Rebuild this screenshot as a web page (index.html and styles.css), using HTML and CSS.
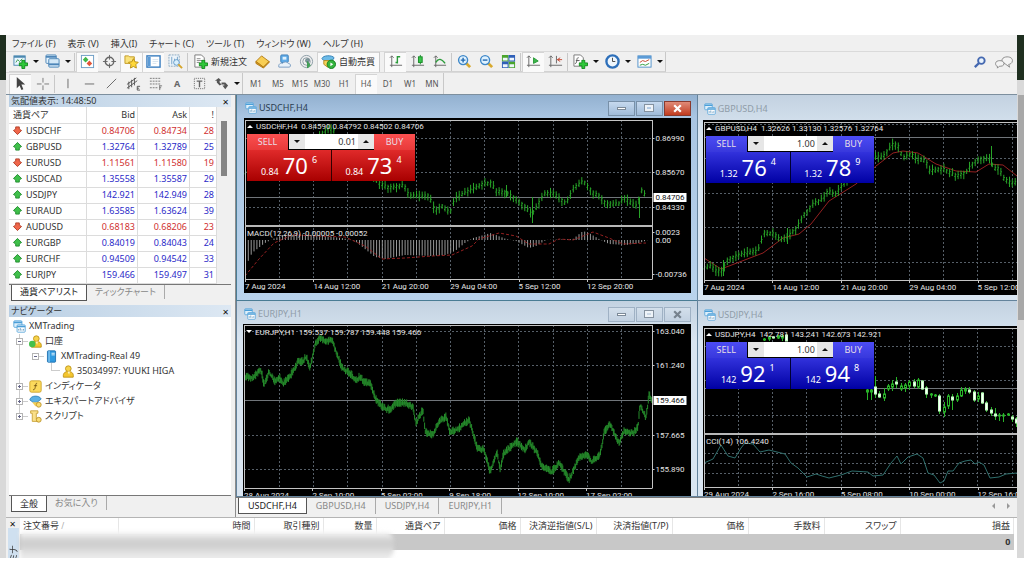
FILE: index.html
```html
<!DOCTYPE html>
<html lang="ja">

<head>
  <meta charset="UTF-8">
  <title>XMTrading</title>
  <link rel="stylesheet" href="styles.css">
</head>

<body>

  <!-- shared icons -->
  <svg class="sprite" aria-hidden="true">
    <symbol id="i-win" viewBox="0 0 16 16">
      <rect x="1" y="1" width="10" height="8" rx="1" fill="#dff0fb" stroke="#4b9fd8"/>
      <path d="M1 3h10" stroke="#4b9fd8" stroke-width="2"/>
      <rect x="5" y="6" width="10" height="9" rx="1" fill="#fff" stroke="#4b9fd8"/>
      <path d="M5 8h10" stroke="#4b9fd8" stroke-width="2"/>
      <path d="M7 13v-2M9 13v-3M11 13v-1.500M13 13v-2" stroke="#5a90b8" fill="none"/>
    </symbol>
    <symbol id="i-up" viewBox="0 0 10 10">
      <path d="M5 .5L9.500 5 7 6.500V9H3V6.500L.5 5z" fill="#3fc04a" stroke="#1d8a2b"/>
    </symbol>
    <symbol id="i-down" viewBox="0 0 10 10">
      <path d="M5 9.500L9.500 5 7 3.500V1H3v2.500L.5 5z" fill="#f0664a" stroke="#b03a22"/>
    </symbol>
    <symbol id="i-person" viewBox="0 0 16 16">
      <circle cx="9" cy="4.500" r="3.500" fill="#f6d34c" stroke="#b98d10"/>
      <path d="M3 15c-1-5 2-7 6-7s7 2 6 7z" fill="#f3c52f" stroke="#b98d10"/>
      <path d="M8 8l2 4 1-4" fill="#fff4c0"/>
    </symbol>
    <symbol id="i-plus" viewBox="0 0 10 10">
      <path d="M3.500.5h3v3h3v3h-3v3h-3v-3h-3v-3h3z" fill="#2fc83a" stroke="#128a1c"/>
    </symbol>
  </svg>

  <div class="desktop">
    <div class="edge edge-left"></div>

    <div class="app">
      <nav class="menubar">
        <button>ファイル (F)</button>
        <button>表示 (V)</button>
        <button>挿入(I)</button>
        <button>チャート (C)</button>
        <button>ツール (T)</button>
        <button>ウィンドウ (W)</button>
        <button>ヘルプ (H)</button>
      </nav>

      <div class="toolbar">
        <div class="tool-group bordered">
          <button class="tool" aria-label="新規チャート"><svg viewBox="0 0 16 16"><rect x="1" y="2" width="12" height="10" fill="#eaf6ff" stroke="#4b88b0"/><path d="M1 3h12" stroke="#4b88b0" stroke-width="2"/><path d="M3 9l2-3 2 2 3-3" stroke="#3c9b50" fill="none"/><use href="#i-plus" x="6" y="6" width="10" height="10"/></svg></button>
          <button class="drop" aria-label="チャート一覧"></button>
          <button class="tool" aria-label="プロファイル"><svg viewBox="0 0 16 16"><rect x="1" y="1" width="11" height="9" rx="1" fill="#e5f3fd" stroke="#4d86b8"/><path d="M1 3h11" stroke="#4d86b8" stroke-width="2"/><rect x="4" y="5" width="11" height="9" rx="1" fill="#d3e8f7" stroke="#4d86b8"/><path d="M4 11h11" stroke="#4d86b8" stroke-width="2"/></svg></button>
          <button class="drop" aria-label="プロファイル一覧"></button>
          <span class="sep"></span>
          <button class="tool on" aria-label="気配値表示"><svg viewBox="0 0 16 16"><rect x="1.500" y="1.500" width="13" height="13" fill="#fff" stroke="#6b9cc4"/><path d="M3 6l3-3 3 3-3 3z" fill="#42b84a"/><path d="M7 10l3-3 3 3-3 3z" fill="#e25638"/></svg></button>
          <button class="tool" aria-label="データウィンドウ"><svg viewBox="0 0 16 16" fill="none" stroke="#666"><circle cx="8" cy="8" r="4.500" stroke-width="1.500"/><path d="M8 1v5M8 10v5M1 8h5M10 8h5"/></svg></button>
          <button class="tool on" aria-label="ナビゲーター"><svg viewBox="0 0 16 16"><path d="M1 2h4l1 1h5v7H1z" fill="#fae37c" stroke="#c39a24"/><path d="M10 5l1.600 3.300 3.600.5-2.600 2.600.6 3.600-3.200-1.700L6.800 15l.6-3.600L4.800 8.800l3.600-.5z" fill="#ffd83a" stroke="#b98f12"/></svg></button>
          <button class="tool on" aria-label="ターミナル"><svg viewBox="0 0 16 16"><rect x="1" y="2" width="14" height="12" fill="#fff" stroke="#3c7fc0" stroke-width="1.500"/><path d="M2 3h3v10H2z" fill="#5c9bd6"/><path d="M7 6h6M7 8h6M7 10h4" stroke="#d4e2ee"/></svg></button>
          <button class="tool" aria-label="ストラテジーテスター"><svg viewBox="0 0 16 16" fill="none"><rect x="1" y="1" width="11" height="12" fill="#edf4fa" stroke="#8aa8c0" stroke-dasharray="2 1"/><path d="M4 3v8M7 5v6M10 3v5" stroke="#72a2c8"/><circle cx="9" cy="9" r="3" fill="#d9effc" stroke="#5f99c8"/><path d="M11 11l4 4" stroke="#d6a52a" stroke-width="2"/></svg></button>
          <span class="sep"></span>
          <button class="tool wide"><svg viewBox="0 0 16 16"><path d="M2 1h7l3 3v10H2z" fill="#fff" stroke="#777"/><path d="M4 5h4M4 7h6M4 9h3" stroke="#888"/><use href="#i-plus" x="6" y="6" width="10" height="10"/></svg>新規注文</button>
          <button class="tool" aria-label="メタエディター"><svg viewBox="0 0 16 16"><path d="M1 8l6-6 8 6-6 6z" fill="#f8ce54" stroke="#b37d15"/><path d="M1 8v2l8 5 6-6V8l-6 6z" fill="#d99a25" stroke="#b37d15"/></svg></button>
          <button class="tool" aria-label="VPS"><svg viewBox="0 0 16 16"><rect x="4" y="1" width="8" height="8" rx="1" fill="#5fabe8" stroke="#3d7fba"/><path d="M6 3h4v3H6z" fill="#dff1fd"/><path d="M2 14c-1-3 2-5 4-4 1-2 5-2 6 0 3 0 3 4 1 4z" fill="#e9f2fa" stroke="#7a9cc0"/></svg></button>
          <button class="tool" aria-label="シグナル"><svg viewBox="0 0 16 16" fill="none" stroke="#8a9aa4"><circle cx="8" cy="8" r="6.500"/><circle cx="8" cy="8" r="4"/><circle cx="9" cy="7" r="2" fill="#7f9aa0" stroke="#6d8488"/><path d="M9 8l3 4-3 3z" fill="#3fa552" stroke="#3b9650"/></svg></button>
          <button class="tool wide on"><svg viewBox="0 0 16 16"><path d="M1 5c1-4 11-4 13-1l-2 3H3z" fill="#6dbbe8" stroke="#2f7fb4"/><path d="M3 7h8v4l-4 3-4-3z" fill="#f7d25a" stroke="#b98d20"/><circle cx="11" cy="11" r="4.500" fill="#35b53f" stroke="#16801f"/><path d="M10 9l3 2-3 2z" fill="#fff"/></svg>自動売買</button>
        </div>
        <div class="tool-group bordered">
          <button class="tool on" aria-label="バーチャート"><svg viewBox="0 0 16 16" fill="none" stroke="#666"><path d="M4 2v12M2 12h13M2 4l2-2 2 2"/><path d="M10 2v8M10 3h3M8 9h2" stroke="#2b9b3a" stroke-width="1.500"/></svg></button>
          <button class="tool" aria-label="ローソク足"><svg viewBox="0 0 16 16" fill="none" stroke="#666"><path d="M4 2v12M2 12h13M2 4l2-2 2 2"/><path d="M11 1v10" stroke="#168a26"/><rect x="9" y="3" width="4" height="6" fill="#39c54a" stroke="#168a26"/></svg></button>
          <button class="tool" aria-label="ラインチャート"><svg viewBox="0 0 16 16" fill="none" stroke="#666"><path d="M4 2v12M2 12h13M2 4l2-2 2 2"/><path d="M4 9c3-5 6-4 10 1" stroke="#2b9b3a" stroke-width="1.500"/></svg></button>
          <span class="sep"></span>
          <button class="tool" aria-label="ズームイン"><svg viewBox="0 0 16 16" fill="none"><path d="M9 9l5 5" stroke="#d8a92e" stroke-width="3"/><circle cx="6.500" cy="6.500" r="4.800" fill="#dff2ff" stroke="#3e87c8" stroke-width="1.500"/><path d="M4 6.500h5M6.500 4v5" stroke="#2369b0" stroke-width="1.500"/></svg></button>
          <button class="tool" aria-label="ズームアウト"><svg viewBox="0 0 16 16" fill="none"><path d="M9 9l5 5" stroke="#d8a92e" stroke-width="3"/><circle cx="6.500" cy="6.500" r="4.800" fill="#dff2ff" stroke="#3e87c8" stroke-width="1.500"/><path d="M4 6.500h5" stroke="#2369b0" stroke-width="1.500"/></svg></button>
          <button class="tool" aria-label="ウィンドウの整列"><svg viewBox="0 0 16 16"><path d="M1 1h7v7H1zM8 8h7v7H8z" fill="#4aa52c"/><path d="M8 1h7v7H8zM1 8h7v7H1z" fill="#2f5fb8"/><path d="M2 4h5v3H2zM9 4h5v3H9zM2 11h5v3H2zM9 11h5v3H9z" fill="#edf5fb"/></svg></button>
          <span class="sep"></span>
          <button class="tool on" aria-label="自動スクロール"><svg viewBox="0 0 16 16" fill="none" stroke="#666"><path d="M3 2v12M1 12h14M1 4l2-2 2 2"/><path d="M8 4l5 3.500L8 10z" fill="#3cb54a" stroke="#2b9b3a"/></svg></button>
          <button class="tool" aria-label="チャートシフト"><svg viewBox="0 0 16 16" fill="none" stroke="#666"><path d="M3 2v12M1 12h14M1 4l2-2 2 2M9 2v8"/><path d="M15 6h-5M13 4l-3 2 3 2" stroke="#c3452f"/></svg></button>
          <span class="sep"></span>
          <button class="tool" aria-label="インディケータ"><svg viewBox="0 0 16 16"><path d="M1 1h7l3 3v9H1z" fill="#fff" stroke="#777"/><path d="M6 4c-3-1-1 7-4 6M3 7h4" stroke="#555" fill="none"/><use href="#i-plus" x="6" y="6" width="10" height="10"/></svg></button>
          <button class="drop" aria-label="インディケータ一覧"></button>
          <button class="tool" aria-label="時間足"><svg viewBox="0 0 16 16"><circle cx="8" cy="8" r="6.500" fill="#eef6fd" stroke="#2d6fba" stroke-width="2.500"/><path d="M8 4v4h3" stroke="#444" fill="none"/></svg></button>
          <button class="drop" aria-label="時間足一覧"></button>
          <button class="tool" aria-label="定型チャート"><svg viewBox="0 0 16 16" fill="none"><rect x="1" y="2" width="14" height="12" fill="#fff" stroke="#4d8fc8"/><path d="M1 3.500h14" stroke="#5c9bd6" stroke-width="3"/><path d="M3 9l3-2 3 1 4-2" stroke="#c3452f"/><path d="M3 12l3-1 3 1 4-2" stroke="#2b9b3a"/></svg></button>
          <button class="drop" aria-label="定型チャート一覧"></button>
        </div>
        <div class="tool-right">
          <button class="tool" aria-label="検索"><svg viewBox="0 0 16 16" fill="none"><circle cx="10" cy="6" r="3.500" fill="#e9f3fd" stroke="#4468b0" stroke-width="2"/><path d="M7.500 8.500L3 13" stroke="#4468b0" stroke-width="2.500"/></svg></button>
          <button class="tool chat" aria-label="チャット"><svg viewBox="0 0 20 16" fill="#f4f4f4" stroke="#888"><path d="M8 7c-2-6 11-7 11-1 0 3-3 4-4 4l1 3-4-3z"/><path d="M1 9c0-4 9-4 9 0 0 3-3 3-5 3l-2 2v-2c-1 0-2-1-2-3z"/></svg></button>
        </div>
      </div>

      <div class="toolbar toolbar-second">
        <div class="tool-group">
          <button class="tool on" aria-label="カーソル"><svg viewBox="0 0 16 16"><path d="M4 1v12l3-3 2 5 2-1-2-5h4z" fill="#444"/></svg></button>
          <button class="tool" aria-label="クロスヘア"><svg viewBox="0 0 16 16" stroke="#777"><path d="M8.500 2v5M8.500 10v5M2 8.500h5M10 8.500h5"/></svg></button>
          <span class="sep"></span>
          <button class="tool" aria-label="垂直線"><svg viewBox="0 0 16 16" stroke="#666"><path d="M8.500 3v10"/></svg></button>
          <button class="tool" aria-label="水平線"><svg viewBox="0 0 16 16" stroke="#666"><path d="M3 8.500h10"/></svg></button>
          <button class="tool" aria-label="トレンドライン"><svg viewBox="0 0 16 16" stroke="#666"><path d="M3 13L13 3"/></svg></button>
          <button class="tool" aria-label="チャネル"><svg viewBox="0 0 16 16" stroke="#555" fill="none"><path d="M1 9l10-7M1 13l11-8M3 6v8M6 4v8M9 2v8M12 11h3M12 13h2M12 15h3M12 11v4"/></svg></button>
          <button class="tool" aria-label="フィボナッチ"><svg viewBox="0 0 16 16" stroke="#777" fill="none"><path d="M2 2.500h12M2 5.500h12M2 8.500h12M2 12.500h8" stroke-dasharray="2 1"/><path d="M12.500 10v5M12 10.500h3M12 12.500h2"/></svg></button>
          <button class="tool letter">A</button>
          <button class="tool" aria-label="テキストラベル"><svg viewBox="0 0 16 16" stroke="#666" fill="none"><rect x="2.500" y="2.500" width="11" height="11" stroke-dasharray="1 1"/><path d="M5 5.500h6M8 5v7" stroke-width="1.500"/></svg></button>
          <button class="tool" aria-label="矢印"><svg viewBox="0 0 16 16" fill="#555"><path d="M5 2l3 3H6v2l2 2-2 1-3-3V5H1zM12 7l3 3-3 4-3-4h2V9H8V7z"/></svg></button>
          <button class="drop" aria-label="矢印一覧"></button>
        </div>
        <div class="tool-group periods">
          <button>M1</button>
          <button>M5</button>
          <button>M15</button>
          <button>M30</button>
          <button>H1</button>
          <button class="on">H4</button>
          <button>D1</button>
          <button>W1</button>
          <button>MN</button>
        </div>
      </div>

      <div class="main">
        <aside class="side">
          <section class="panel">
            <header class="panel-title">気配値表示: 14:48:50<button class="close" aria-label="閉じる"></button></header>
            <div class="market">
              <table class="quotes">
                <colgroup><col><col class="c-bid"><col class="c-ask"><col class="c-spread"></colgroup>
                <thead>
                  <tr><th>通貨ペア</th><th>Bid</th><th>Ask</th><th>!</th></tr>
                </thead>
                <tbody>
                  <tr class="down"><td><svg><use href="#i-down"/></svg>USDCHF</td><td>0.84706</td><td>0.84734</td><td>28</td></tr>
                  <tr class="up"><td><svg><use href="#i-up"/></svg>GBPUSD</td><td>1.32764</td><td>1.32789</td><td>25</td></tr>
                  <tr class="down"><td><svg><use href="#i-down"/></svg>EURUSD</td><td>1.11561</td><td>1.11580</td><td>19</td></tr>
                  <tr class="up"><td><svg><use href="#i-up"/></svg>USDCAD</td><td>1.35558</td><td>1.35587</td><td>29</td></tr>
                  <tr class="up"><td><svg><use href="#i-up"/></svg>USDJPY</td><td>142.921</td><td>142.949</td><td>28</td></tr>
                  <tr class="up"><td><svg><use href="#i-up"/></svg>EURAUD</td><td>1.63585</td><td>1.63624</td><td>39</td></tr>
                  <tr class="down"><td><svg><use href="#i-down"/></svg>AUDUSD</td><td>0.68183</td><td>0.68206</td><td>23</td></tr>
                  <tr class="up"><td><svg><use href="#i-up"/></svg>EURGBP</td><td>0.84019</td><td>0.84043</td><td>24</td></tr>
                  <tr class="up"><td><svg><use href="#i-up"/></svg>EURCHF</td><td>0.94509</td><td>0.94542</td><td>33</td></tr>
                  <tr class="up"><td><svg><use href="#i-up"/></svg>EURJPY</td><td>159.466</td><td>159.497</td><td>31</td></tr>
                </tbody>
              </table>
              <div class="scroll"><div class="thumb"></div></div>
            </div>
            <div class="tabs">
              <button class="tab active">通貨ペアリスト</button>
              <button class="tab">ティックチャート</button>
            </div>
          </section>

          <section class="panel navigator">
            <header class="panel-title">ナビゲーター<button class="close" aria-label="閉じる"></button></header>
            <ul class="tree">
              <li><svg viewBox="0 0 16 16"><use href="#i-win"/></svg>XMTrading</li>
              <li class="l1"><i class="box minus"></i><svg viewBox="0 0 16 16"><use href="#i-person"/><circle cx="4" cy="11" r="4" fill="#45c04c"/></svg>口座</li>
              <li class="l2"><i class="box minus"></i><svg viewBox="0 0 16 16"><rect x="3" y="1" width="10" height="14" rx="1" fill="#2f9ae0" stroke="#1768a8"/><path d="M5 1v14" stroke="#bfe2fa"/><path d="M8 4h4M8 6h4" stroke="#fff"/></svg>XMTrading-Real 49</li>
              <li class="l3"><i class="elbow"></i><svg viewBox="0 0 16 16"><use href="#i-person"/></svg>35034997: YUUKI HIGA</li>
              <li class="l1"><i class="box plus"></i><svg viewBox="0 0 16 16"><rect x="1" y="1" width="14" height="14" rx="2" fill="#fbd95c" stroke="#c99e22"/><path d="M10 4c-3-1-1 9-5 8M6 7h4" stroke="#6b4b10" fill="none"/></svg>インディケータ</li>
              <li class="l1"><i class="box plus"></i><svg viewBox="0 0 16 16"><path d="M1 6c1-6 12-6 14-1l-5 4H5z" fill="#5cb1e4" stroke="#2f7fb4"/><path d="M4 9h7l-3 5z" fill="#f5cf56"/><circle cx="12" cy="12" r="3" fill="#f8dc72" stroke="#b98d20"/></svg>エキスパートアドバイザ</li>
              <li class="l1"><i class="box plus"></i><svg viewBox="0 0 16 16"><path d="M2 1h9v3H9v7h3v3H4V4H2z" fill="#fae08a" stroke="#c39a2c"/><circle cx="12" cy="12" r="3" fill="#f8dc72" stroke="#b98d20"/></svg>スクリプト</li>
            </ul>
            <div class="tabs">
              <button class="tab active">全般</button>
              <button class="tab">お気に入り</button>
            </div>
          </section>
        </aside>

        <div class="workspace">
          <div class="mdi">
            <section class="win active">
              <header class="win-title"><svg><use href="#i-win"/></svg>USDCHF,H4
                <div class="win-buttons"><button aria-label="最小化"><i class="g-min"></i></button><button aria-label="最大化"><i class="g-max"></i></button><button class="x" aria-label="閉じる"><svg viewBox="0 0 10 10"><path d="M2 2l6 6M8 2l-6 6"/></svg></button></div>
              </header>
              <div class="chart" data-chart="usdchf">
                <div class="trade red">
                  <button class="side-btn">SELL</button>
                  <div class="lot"><button class="dec" aria-label="減らす"></button><input type="text" value="0.01" aria-label="USDCHF ロット"><button class="inc" aria-label="増やす"></button></div>
                  <button class="side-btn">BUY</button>
                  <div class="price"><span>0.84</span><b>70</b><sup>6</sup></div>
                  <div class="price"><span>0.84</span><b>73</b><sup>4</sup></div>
                </div>
              </div>
            </section>

            <section class="win tall">
              <header class="win-title"><svg><use href="#i-win"/></svg>GBPUSD,H4</header>
              <div class="chart" data-chart="gbpusd">
                <div class="trade blue">
                  <button class="side-btn">SELL</button>
                  <div class="lot"><button class="dec" aria-label="減らす"></button><input type="text" value="1.00" aria-label="GBPUSD ロット"><button class="inc" aria-label="増やす"></button></div>
                  <button class="side-btn">BUY</button>
                  <div class="price"><span>1.32</span><b>76</b><sup>4</sup></div>
                  <div class="price"><span>1.32</span><b>78</b><sup>9</sup></div>
                </div>
              </div>
            </section>

            <section class="win">
              <header class="win-title"><svg><use href="#i-win"/></svg>EURJPY,H1
                <div class="win-buttons"><button aria-label="最小化"><i class="g-min"></i></button><button aria-label="最大化"><i class="g-max"></i></button><button aria-label="閉じる"><svg viewBox="0 0 10 10"><path d="M2 2l6 6M8 2l-6 6"/></svg></button></div>
              </header>
              <div class="chart" data-chart="eurjpy"></div>
            </section>

            <section class="win tall">
              <header class="win-title"><svg><use href="#i-win"/></svg>USDJPY,H4</header>
              <div class="chart" data-chart="usdjpy">
                <div class="trade blue">
                  <button class="side-btn">SELL</button>
                  <div class="lot"><button class="dec" aria-label="減らす"></button><input type="text" value="1.00" aria-label="USDJPY ロット"><button class="inc" aria-label="増やす"></button></div>
                  <button class="side-btn">BUY</button>
                  <div class="price"><span>142</span><b>92</b><sup>1</sup></div>
                  <div class="price"><span>142</span><b>94</b><sup>8</sup></div>
                </div>
              </div>
            </section>
          </div>
          <div class="tabs chart-tabs">
            <button class="tab active">USDCHF,H4</button>
            <button class="tab">GBPUSD,H4</button>
            <button class="tab">USDJPY,H4</button>
            <button class="tab">EURJPY,H1</button>
            <span class="tab-arrows"><button class="left" aria-label="前のタブ"></button><button class="right" aria-label="次のタブ"></button></span>
          </div>
        </div>
      </div>

      <section class="terminal">
        <div class="terminal-side">
          <button class="close" aria-label="閉じる"></button>
          <div class="terminal-name"><span>ターミナル</span></div>
        </div>
        <table class="orders">
          <colgroup><col class="o-id"><col class="o-time"><col class="o-type"><col class="o-size"><col class="o-pair"><col class="o-std"><col class="o-std"><col class="o-std"><col class="o-std"><col class="o-std"><col class="o-std"><col></colgroup>
          <thead>
            <tr><th>注文番号 <small>/</small></th><th>時間</th><th>取引種別</th><th>数量</th><th>通貨ペア</th><th>価格</th><th>決済逆指値(S/L)</th><th>決済指値(T/P)</th><th>価格</th><th>手数料</th><th>スワップ</th><th>損益</th></tr>
          </thead>
          <tbody>
            <tr><td colspan="11"></td><td>0</td></tr>
          </tbody>
        </table>
        <div class="smudge"></div>
      </section>
    </div>

    <div class="edge edge-right"><div class="edge-thumb"></div></div>
  </div>

  <script src="charts.js"></script>
</body>

</html>
```
FILE: styles.css
```css
* {
  box-sizing: border-box;
}

body {
  margin: 0;
  padding: 35px 0 18px;
  background-color: #fff;
  color: #333;
  font-family: "Noto Sans", "Noto Sans CJK JP", sans-serif;
  font-size: 9px;
  line-height: 12px;
  font-feature-settings: "palt";
  overflow: hidden;
}

button,
input {
  margin: 0;
  padding: 0;
  border: 0;
  background: none;
  color: inherit;
  font: inherit;
  font-feature-settings: inherit;
}

table {
  border-collapse: collapse;
  table-layout: fixed;
  width: 100%;
}

.sprite {
  display: none;
}

.desktop {
  display: flex;
}

.edge {
  background: linear-gradient(#1f2f20 0 45px, #d9d9d9 45px);
  width: 6px;
}

.edge-right {
  width: 7px;
  padding: 60px 0 0 1px;
}

.edge-thumb {
  height: 225px;
  background-color: #a8a8a8;
}

.app {
  flex: 1;
  min-width: 0;
  background-color: #f0f0f0;
}

/* menu and toolbars */
.menubar {
  display: flex;
  gap: 12px;
  height: 16px;
  padding: 2px 6px 0;
}

.toolbar {
  display: flex;
  height: 21px;
  padding-left: 3px;
  border-top: 1px solid #dadada;
}

.toolbar-second {
  height: 23px;
  border-bottom: 1px solid #7d8f9e;
}

.tool-group {
  display: flex;
  align-items: center;
  border-right: 1px solid #c8c8c8;
  margin-right: 2px;
}

.tool-group.bordered {
  border-bottom: 1px solid #d2d2d2;
  margin-right: 4px;
}

.tool {
  display: flex;
  align-items: center;
  justify-content: center;
  width: 22px;
  height: 20px;
}

.tool svg {
  width: 15px;
  height: 15px;
}

.tool.chat svg {
  width: 20px;
}

.tool.wide {
  width: 62px;
  gap: 3px;
}

.tool.on,
.periods .on {
  background-color: #fafafa;
  box-shadow: inset 1px 1px 0 #d4d4d4;
}

.tool.letter {
  font-weight: bold;
  color: #666;
}

.drop {
  width: 10px;
  height: 20px;
}

.drop::before,
.dec::before,
.inc::before {
  content: "";
  display: block;
  width: 0;
  margin: 0 auto;
  border: solid transparent;
  border-width: 3px 3px 0;
  border-top-color: #111;
}

.sep {
  width: 1px;
  height: 18px;
  margin: 0 1px;
  background-color: #c8c8c8;
}

.tool-right {
  display: flex;
  gap: 3px;
  margin-left: auto;
  padding-right: 2px;
}

.periods button {
  width: 22px;
  height: 20px;
  color: #555;
  font-size: 8px;
}

/* left side */
.main {
  display: flex;
}

.side {
  display: flex;
  flex-direction: column;
  gap: 3px;
  width: 230px;
  padding: 0 4px 4px 3px;
  border-right: 1px solid #8c8c8c;
}

.panel-title {
  display: flex;
  justify-content: space-between;
  align-items: center;
  height: 12px;
  padding: 0 2px;
  background: linear-gradient(90deg, #b9cfe4, #dde8f3);
}

.close {
  position: relative;
  width: 7px;
  height: 10px;
}

.close::before {
  content: "✕";
  font: bold 8px/10px "DejaVu Sans", sans-serif;
  color: #111;
}

.market {
  display: flex;
  background-color: #fff;
  border-bottom: 1px solid #777;
}

.quotes {
  flex: 1;
}

.c-bid {
  width: 51px;
}

.c-ask {
  width: 52px;
}

.c-spread {
  width: 27px;
}

.quotes th,
.quotes td {
  height: 16px;
  padding: 0 2px;
  border: 1px solid #dcdcdc;
  border-top: 0;
  border-left: 0;
  font-weight: normal;
  text-align: right;
}

.quotes th:first-child,
.quotes td:first-child {
  padding-left: 4px;
  color: #333;
  text-align: left;
}

.quotes svg {
  width: 9px;
  height: 9px;
  margin-right: 4px;
  vertical-align: -1px;
}

.quotes .down {
  color: #d03030;
}

.quotes .up {
  color: #2a2ac8;
}

.scroll {
  width: 14px;
  padding: 14px 4px 0;
  background-color: #f0f0f0;
}

.thumb {
  height: 55px;
  background-color: #858585;
}

.tabs {
  display: flex;
  align-items: flex-start;
  height: 17px;
  padding-left: 2px;
}

.tab {
  height: 14px;
  padding: 0 8px;
  border-right: 1px solid #aaa;
  color: #888;
}

.tab.active {
  height: 16px;
  background-color: #fff;
  border: 1px solid #555;
  border-top: 0;
  color: #222;
}

.navigator {
  display: flex;
  flex-direction: column;
  flex: 1;
}

.tree {
  position: relative;
  flex: 1;
  margin: 0;
  padding: 2px 0 0 4px;
  list-style: none;
  background-color: #fff;
  border-bottom: 1px solid #777;
}

/* trunk line between the first and last expander */
.tree::before {
  content: "";
  position: absolute;
  top: 17px;
  left: 10px;
  height: 82px;
  border-left: 1px solid #ccc;
}

.tree li {
  display: flex;
  align-items: center;
  height: 15px;
}

.tree svg {
  width: 13px;
  height: 13px;
  margin-right: 3px;
}

.tree .l1 {
  padding-left: 3px;
}

.tree .l2 {
  padding-left: 19px;
}

.tree .l3 {
  padding-left: 38px;
}

.box {
  position: relative;
  width: 7px;
  height: 7px;
  margin-right: 6px;
  border: 1px solid #b4b4b4;
  background: linear-gradient(#668, #668) center / 3px 1px no-repeat #fff;
}

.box::after {
  content: "";
  position: absolute;
  top: 2px;
  left: 6px;
  width: 5px;
  border-top: 1px solid #ccc;
}

.box.plus {
  background: linear-gradient(#668, #668) center / 3px 1px no-repeat, linear-gradient(#668, #668) center / 1px 3px no-repeat #fff;
}

.elbow {
  width: 9px;
  height: 8px;
  margin: -8px 1px 0 0;
  border: solid #ccc;
  border-width: 0 0 1px 1px;
}

/* chart windows */
.workspace {
  flex: 1;
  min-width: 0;
}

.mdi {
  display: grid;
  grid-template-columns: 59% 1fr;
  grid-template-rows: 206px 196px;
  border-bottom: 1px solid #777;
  overflow: hidden;
}

.win {
  min-width: 0;
  padding: 0 6px 0;
  overflow: hidden;
  background: linear-gradient(#c3d2e1, #d9e5f1 40px);
  border: solid #64839c;
  border-width: 0 0 1px 1px;
}

.win.active {
  padding-left: 7px;
  background: linear-gradient(#93b1d0, #a9c5e2 22px, #b9d3ec);
  border-color: #4a7c94;
}

.win.tall {
  padding: 0 0 0 5px;
}

.win-title {
  display: flex;
  align-items: center;
  height: 23px;
  padding: 3px 0 0 1px;
  color: #8f9ca8;
}

.win.tall .win-title {
  height: 25px;
}

.win.active .win-title {
  color: #2b3d50;
}

.win-title > svg {
  width: 12px;
  height: 12px;
  margin-right: 2px;
}

.win-buttons {
  display: flex;
  gap: 1px;
  margin-left: auto;
}

.win-buttons button {
  display: flex;
  align-items: center;
  justify-content: center;
  width: 27px;
  height: 15px;
  border: 1px solid #9fb1c4;
  background: linear-gradient(#d3dfeb, #c2d1e1);
}

.active .win-buttons button {
  border-color: #7890a8;
  background: linear-gradient(#c6d9ee, #9fbbd9);
}

.active .win-buttons .x {
  border-color: #8a3a2e;
  background: linear-gradient(#e08b78, #c23c20);
}

.g-min {
  width: 9px;
  height: 3px;
  background-color: #fff;
  border: 1px solid #7c8a98;
}

.g-max {
  width: 8px;
  height: 6px;
  border: 2px solid #eef3f8;
  outline: 1px solid #8592a0;
}

.win-buttons svg {
  width: 11px;
  height: 11px;
  stroke: #76828e;
  stroke-width: 2;
}

.win-buttons .x svg {
  stroke: #fff;
}

.chart {
  position: relative;
  height: 175px;
  background-color: #000;
}

.chart > svg {
  display: block;
  width: 100%;
  height: 175px;
}

.chart text {
  fill: #e4e4e4;
  font-family: Roboto, "Noto Sans", sans-serif;
  font-size: 8px;
}

.chart text.dark {
  fill: #111;
}

.grid {
  stroke: #565f68;
  stroke-dasharray: 2 2;
}

.frame {
  stroke: #c4c4c4;
}

.split {
  stroke: #b8b8b8;
  stroke-width: 2;
}

.now {
  stroke: #70757a;
}

.bars {
  fill: none;
  stroke: #28a428;
}

.dense {
  fill: none;
  stroke: #258a2b;
}

.histogram {
  stroke: #989898;
}

.signal,
.average {
  fill: none;
  stroke: #942020;
}

.signal {
  stroke-dasharray: 3 2;
}

.cci {
  fill: none;
  stroke: #2f6e6c;
}

/* one click trading box, lies over the chart */
.trade {
  position: absolute;
  top: 16px;
  left: 3px;
  display: grid;
  grid-template-columns: 41px 43px 43px 41px;
  grid-template-rows: 16px 31px;
  background-color: #000;
  color: #fff;
}

.side-btn {
  color: #e8dfe6;
}

.lot {
  grid-column: 2 / 4;
  display: flex;
  margin: 0 0 1px 1px;
  background-color: #fff;
  color: #333;
}

.lot input {
  flex: 1;
  min-width: 0;
  padding-right: 2px;
  text-align: right;
}

.lot button {
  width: 16px;
  background-color: #e6e6e6;
}

.inc::before {
  border-width: 0 3px 3px;
  border-bottom-color: #111;
}

.price {
  grid-column: span 2;
  display: flex;
  align-items: flex-end;
  justify-content: center;
  padding-bottom: 4px;
}

.price:last-child {
  border-left: 1px solid #300;
}

.price span {
  margin-right: 4px;
  line-height: 10px;
}

.price b {
  font-size: 22px;
  font-weight: normal;
  line-height: 24px;
}

.price sup {
  align-self: flex-start;
  margin-left: 4px;
  padding-top: 4px;
  font-size: 9px;
  line-height: 12px;
}

.red .side-btn {
  background: linear-gradient(#fb5050, #e83a3a);
}

.red .price {
  background: linear-gradient(#e02a2a, #a80000);
}

.blue .side-btn {
  background: linear-gradient(#4c4cf4, #3838dc);
}

.blue .price {
  background: linear-gradient(#3232dc, #0000a4);
}

.blue .price:last-child {
  border-left-color: #003;
}

.chart-tabs {
  height: 19px;
}

.chart-tabs .tab {
  padding: 0 9px;
  height: 16px;
}

.tab-arrows {
  display: flex;
  gap: 12px;
  margin: 5px 7px 0 auto;
}

.tab-arrows button {
  border: 3px solid transparent;
}

.tab-arrows .left {
  border-left-width: 0;
  border-right-color: #999;
}

.tab-arrows .right {
  border-right-width: 0;
  border-left-color: #999;
}

/* terminal */
.terminal {
  position: relative;
  display: flex;
  align-items: flex-start;
  height: 41px;
  overflow: hidden;
  background-color: #fff;
  border-top: 1px solid #b4b4b4;
}

.terminal-side {
  width: 14px;
  height: 40px;
  padding-left: 3px;
  background-color: #f0f0f0;
}

.terminal-name {
  width: 11px;
  height: 50px;
  margin-left: -1px;
  background-color: #cfe0f0;
}

.terminal-name span {
  display: block;
  padding-bottom: 19px;
  writing-mode: vertical-rl;
  text-orientation: sideways;
  transform: rotate(180deg);
  line-height: 11px;
}

.terminal-side .close {
  display: block;
}

.orders {
  flex: 1;
  margin-right: 3px;
}

.orders th {
  height: 16px;
  padding: 0 3px 0 0;
  border-right: 1px solid #e6e6e6;
  font-weight: normal;
  text-align: right;
  white-space: nowrap;
}

.orders th:first-child {
  padding-left: 3px;
  text-align: left;
}

.orders small {
  color: #aaa;
  font-size: 8px;
}

.orders td {
  height: 16px;
  padding: 0 3px;
  background-color: #c8c8c8;
  font-weight: bold;
  text-align: right;
}

.o-id {
  width: 98px;
}

.o-time {
  width: 136px;
}

.o-type {
  width: 69px;
}

.o-size {
  width: 53px;
}

.o-pair {
  width: 68px;
}

.o-std {
  width: 76px;
}

/* hides the order line */
.smudge {
  position: absolute;
  left: 14px;
  top: 13px;
  width: 37%;
  height: 34px;
  background: linear-gradient(#fff, #d2d2d2 9px, #cecece 14px, #ececec 26px);
  border-radius: 0 10px 18px 0;
  filter: blur(2px);
}

.terminal-name span {
  padding-bottom: 12px;
}
```
FILE: charts.js
```js
const NS = "http://www.w3.org/2000/svg";
const STEP = 34.2; // distance between vertical grid lines

const charts = {
  usdchf: {
    title: "USDCHF,H4  0.84590 0.84792 0.84502 0.84706", arrow: "up",
    scale: true, top: 2, bottom: 161, split: 108, first: 35,
    rows: [20, 54, 89], now: 79,
    labels: [[20, "0.86990"], [54, "0.85670"], [89, "0.84330"], [114, "0.0023"], [122, "0.00"], [156, "-0.00736"]],
    price: "0.84706",
    times: ["7 Aug 2024", "14 Aug 12:00", "21 Aug 20:00", "29 Aug 04:00", "5 Sep 12:00", "12 Sep 20:00"],
    bars: [[1, 55], [60, 30], [85, 10], [90, 13], [96, 30], [135, 65], [145, 70], [160, 67], [165, 78], [185, 78], [191, 93], [198, 88], [206, 95], [211, 80], [221, 75], [239, 66], [247, 65], [252, 73], [262, 75], [272, 81], [282, 90], [288, 97], [292, 90], [300, 76], [309, 75], [322, 86], [329, 71], [339, 63], [349, 75], [355, 78], [362, 86], [375, 86], [380, 80], [392, 88], [398, 72], [402, 79]],
    spikes: [[288, 79, 105], [395, 80, 100], [262, 67, 79]],
    macd: [[1, 150], [8, 135], [21, 125], [31, 120], [45, 116], [71, 117], [98, 120], [111, 123], [121, 131], [131, 139], [141, 141], [161, 137], [188, 138], [201, 137], [211, 133], [221, 125], [229, 120], [247, 115], [262, 121], [272, 123], [285, 130], [292, 128], [302, 122], [329, 121], [339, 113], [345, 115], [355, 121], [365, 126], [382, 127], [395, 125], [404, 122]],
    signal: [[1, 158], [15, 141], [30, 125], [48, 117], [101, 119], [121, 128], [138, 141], [161, 140], [188, 138], [208, 137], [228, 128], [235, 121], [255, 115], [272, 118], [285, 126], [305, 126], [315, 121], [329, 122], [349, 114], [365, 120], [379, 126], [402, 125]],
    note: "MACD(12,26,9) -0.00005 -0.00052"
  },
  gbpusd: {
    title: "GBPUSD,H4  1.32626 1.33130 1.32576 1.32764", arrow: "up",
    top: 2, bottom: 160, first: 35, rows: [4, 38, 73, 107, 142], now: 17,
    times: ["7 Aug 2024", "14 Aug 12:00", "21 Aug 20:00", "29 Aug 04:00", "5 Sep 12:00"],
    bars: [[1, 148], [8, 146], [13, 151], [20, 151], [23, 141], [33, 136], [43, 133], [55, 131], [61, 113], [71, 114], [76, 119], [83, 118], [93, 109], [100, 96], [110, 84], [120, 79], [125, 71], [133, 75], [136, 69], [160, 43], [173, 37], [180, 37], [190, 24], [195, 26], [200, 38], [208, 34], [213, 39], [223, 41], [226, 51], [240, 49], [253, 56], [263, 53], [268, 45], [276, 39], [288, 39], [290, 48], [296, 49], [301, 59], [308, 63], [340, 58]],
    spikes: [[288, 26, 46], [84, 108, 124], [20, 140, 156]],
    average: [[1, 138], [18, 149], [26, 146], [60, 133], [80, 118], [96, 114], [108, 104], [126, 81], [153, 64], [173, 46], [190, 33], [200, 31], [215, 33], [233, 44], [253, 51], [273, 52], [286, 44], [300, 45], [314, 56]]
  },
  eurjpy: {
    title: "EURJPY,H1  159.537 159.787 159.448 159.466", arrow: "down",
    scale: true, top: 1, bottom: 164, first: 36, rows: [7, 41, 111, 145], now: 76,
    labels: [[7, "163.040"], [41, "161.240"], [111, "157.665"], [145, "155.890"]],
    price: "159.466",
    times: ["28 Aug 2024", "2 Sep 10:00", "5 Sep 02:00", "9 Sep 18:00", "12 Sep 10:00", "17 Sep 02:00"],
    line: [[2, 53], [10, 54], [18, 46], [21, 61], [26, 48], [32, 58], [37, 54], [40, 60], [47, 53], [55, 38], [60, 38], [63, 33], [67, 44], [72, 21], [77, 14], [83, 18], [89, 15], [93, 28], [99, 44], [105, 48], [113, 56], [117, 53], [122, 59], [127, 59], [133, 76], [140, 84], [147, 86], [153, 79], [163, 79], [170, 84], [173, 99], [180, 86], [182, 108], [190, 111], [195, 99], [203, 93], [207, 109], [217, 104], [226, 96], [231, 113], [234, 124], [241, 126], [247, 148], [254, 128], [257, 146], [261, 129], [274, 118], [282, 126], [286, 118], [294, 129], [299, 143], [309, 148], [316, 139], [326, 156], [336, 134], [344, 131], [349, 138], [357, 131], [361, 109], [367, 100], [376, 119], [381, 108], [391, 109], [395, 103], [397, 81], [403, 94], [406, 71], [409, 76]]
  },
  usdjpy: {
    title: "USDJPY,H4  142.781 143.241 142.673 142.921", arrow: "up",
    top: 2, bottom: 161, split: 108, first: 35,
    rows: [20, 54, 89, 127, 137, 147], now: 62,
    times: ["29 Aug 2024", "2 Sep 16:00", "5 Sep 08:00", "10 Sep 00:00", "12 Sep 16:00"],
    // x, high, low, body top, body bottom, filled
    candles: [[61, 12, 15, 13, 14, 0], [66, 10, 15, 11, 13, 0], [70, 10, 13, 11, 12, 1], [75, 9, 13, 10, 12, 0], [79, 9, 15, 10, 12, 0], [83, 8, 15, 9, 15, 1], [164, 60, 74, 64, 66, 0], [168, 60, 74, 64, 66, 0], [172, 50, 72, 61, 68, 1], [176, 65, 72, 68, 71, 1], [181, 62, 75, 68, 72, 0], [185, 58, 65, 60, 63, 0], [189, 54, 65, 58, 61, 0], [193, 51, 62, 56, 58, 1], [198, 57, 65, 60, 63, 0], [202, 57, 66, 59, 62, 0], [206, 54, 64, 56, 60, 0], [211, 53, 62, 56, 60, 1], [215, 52, 63, 54, 61, 0], [219, 54, 64, 55, 63, 1], [223, 60, 72, 62, 68, 1], [228, 67, 72, 68, 69, 0], [232, 68, 71, 69, 70, 0], [236, 68, 88, 70, 85, 1], [241, 76, 91, 81, 86, 0], [245, 68, 83, 70, 80, 0], [249, 68, 84, 71, 74, 1], [254, 67, 76, 70, 74, 0], [258, 61, 71, 64, 70, 0], [262, 61, 68, 63, 65, 0], [266, 61, 68, 64, 66, 1], [271, 64, 76, 66, 74, 1], [275, 66, 76, 70, 73, 0], [279, 66, 78, 67, 77, 1], [283, 75, 86, 77, 84, 1], [288, 81, 90, 84, 87, 1], [292, 82, 94, 88, 90, 1], [296, 87, 95, 89, 90, 0], [300, 87, 96, 89, 90, 0], [305, 87, 90, 88, 89, 0], [309, 89, 96, 91, 93, 1], [313, 91, 101, 93, 97, 1]],
    cci: [[1, 137], [10, 133], [18, 119], [25, 130], [32, 132], [38, 122], [42, 117], [50, 118], [57, 126], [66, 124], [74, 126], [82, 128], [88, 137], [95, 142], [104, 151], [113, 148], [119, 150], [126, 152], [138, 149], [149, 145], [165, 146], [170, 150], [180, 149], [188, 137], [194, 130], [198, 138], [205, 131], [214, 128], [220, 132], [225, 147], [231, 149], [237, 157], [241, 155], [245, 145], [250, 145], [256, 137], [262, 135], [268, 134], [272, 138], [276, 136], [281, 139], [287, 152], [296, 151], [303, 148], [314, 147]],
    note: "CCI(14) 106.4240"
  }
};

function add(svg, name, attrs, text) {
  const el = document.createElementNS(NS, name);
  for (const key in attrs) el.setAttribute(key, attrs[key]);
  if (text) el.textContent = text;
  svg.appendChild(el);
}

// value of a polyline at x
function valueAt(points, x) {
  for (let i = 1; i < points.length; i++) {
    const [x0, y0] = points[i - 1];
    const [x1, y1] = points[i];
    if (x <= x1) return y0 + (y1 - y0) * (x - x0) / (x1 - x0);
  }
  return points[points.length - 1][1];
}

// repeatable noise from 0 to 1
function noise(n) {
  const v = Math.sin(n * 127.1) * 43758.5453;
  return v - Math.floor(v);
}

function toPath(points) {
  return "M" + points.map(p => p.join(" ")).join("L");
}

function drawChart(box) {
  const c = charts[box.dataset.chart];
  const svg = document.createElementNS(NS, "svg");
  box.prepend(svg);
  const width = box.clientWidth;
  const right = c.scale ? width - 38.5 : width;

  let grid = "";
  for (let x = c.first; x < right; x += STEP) grid += `M${Math.round(x) + 0.5} ${c.top}V${c.bottom}`;
  c.rows.forEach(y => grid += `M1 ${y + 0.5}H${right}`);
  add(svg, "path", { d: grid, class: "grid" });
  add(svg, "path", { d: `M1 ${c.now + 0.5}H${right}`, class: "now" });

  if (c.macd) {
    let d = "";
    for (let x = 1.5; x < 404; x += STEP / 12) d += `M${x.toFixed(1)} 122V${valueAt(c.macd, x).toFixed(1)}`;
    add(svg, "path", { d, class: "histogram" });
    add(svg, "path", { d: toPath(c.signal), class: "signal" });
  }
  if (c.average) add(svg, "path", { d: toPath(c.average), class: "average" });
  if (c.bars) {
    let d = "";
    const end = Math.min(right, c.bars[c.bars.length - 1][0] + 1);
    for (let x = 1.5, i = 0; x < end; x += STEP / 12, i++) {
      const y = valueAt(c.bars, x);
      const hi = y - 2 - noise(i) * 4;
      const lo = y + 2 + noise(i + 500) * 4;
      d += `M${x.toFixed(1)} ${hi.toFixed(1)}V${lo.toFixed(1)}M${(x - 1).toFixed(1)} ${(y + 1).toFixed(1)}h1m0 -2h1`;
    }
    c.spikes.forEach(([x, hi, lo]) => d += `M${x + 0.5} ${hi}V${lo}`);
    add(svg, "path", { d, class: "bars" });
  }
  if (c.line) {
    let d = "";
    for (let x = 2, i = 0; x < 409; x += STEP / 48, i++) {
      const y = valueAt(c.line, x);
      d += `M${x.toFixed(1)} ${(y - 1 - noise(i) * 4).toFixed(1)}V${(y + 1 + noise(i + 900) * 3).toFixed(1)}`;
    }
    add(svg, "path", { d, class: "dense" });
  }
  if (c.candles) {
    c.candles.forEach(([x, hi, lo, top, bottom, filled]) => {
      add(svg, "path", { d: `M${x + 0.5} ${hi}V${lo}`, stroke: "#28b428" });
      add(svg, "rect", { x: x - 0.5, y: top, width: 2, height: bottom - top, fill: filled ? "#fff" : "#000", stroke: filled ? "#c8ffc8" : "#28b428" });
    });
  }
  if (c.cci) add(svg, "path", { d: toPath(c.cci), class: "cci" });

  // frame and panes
  add(svg, "path", { d: `M1.5 ${c.bottom}V${c.top}M1 ${c.top + 0.5}H${right}M1 ${c.bottom + 0.5}H${right}${c.scale ? `M${right} ${c.top}V${c.bottom}` : ""}`, class: "frame" });
  if (c.split) add(svg, "path", { d: `M1 ${c.split}H${right}`, class: "split" });

  add(svg, "path", { d: c.arrow === "up" ? "M3 10h6l-3 -3z" : "M3 6h6l-3 3z", fill: "#fff" });
  add(svg, "text", { x: 12, y: 11, style: "white-space: pre" }, c.title);
  if (c.note) add(svg, "text", { x: 3, y: 118 }, c.note);
  c.times.forEach((t, i) => {
    const x = 1 + i * STEP * 2;
    add(svg, "path", { d: `M${Math.round(x) + 0.5} ${c.bottom}v3`, class: "frame" });
    add(svg, "text", { x, y: c.bottom + 10 }, t);
  });
  if (c.scale) {
    c.labels.forEach(([y, t]) => {
      add(svg, "text", { x: right + 3, y: y + 3 }, t);
      if (t !== "0.00") add(svg, "path", { d: `M${right} ${y + 0.5}h2`, class: "frame" });
    });
    add(svg, "rect", { x: right + 1, y: c.now - 4, width: 33, height: 9, fill: "#fff" });
    add(svg, "text", { x: right + 3, y: c.now + 3, class: "dark" }, c.price);
  }
}

document.querySelectorAll(".chart").forEach(drawChart);
```
